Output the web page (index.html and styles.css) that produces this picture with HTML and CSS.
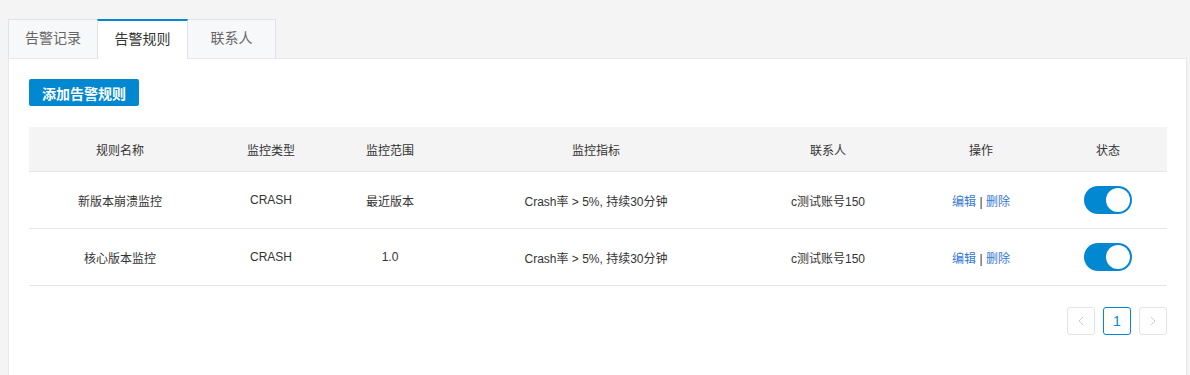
FILE: index.html
```html
<!DOCTYPE html>
<html>

<head>
  <meta charset="UTF-8">
  <title>告警规则</title>
  <link rel="stylesheet" href="styles.css">
</head>

<body>
  <ul class="tabs">
    <li><a href="#">告警记录</a></li>
    <li class="active"><a href="#">告警规则</a></li>
    <li><a href="#">联系人</a></li>
  </ul>

  <div class="panel">
    <button class="add-button">添加告警规则</button>

    <table class="rules">
      <thead>
        <tr>
          <th class="col-name">规则名称</th>
          <th class="col-type">监控类型</th>
          <th class="col-range">监控范围</th>
          <th class="col-metric">监控指标</th>
          <th class="col-contact">联系人</th>
          <th class="col-action">操作</th>
          <th class="col-status">状态</th>
        </tr>
      </thead>
      <tbody>
        <tr>
          <td>新版本崩溃监控</td>
          <td>CRASH</td>
          <td>最近版本</td>
          <td>Crash率 &gt; 5%, 持续30分钟</td>
          <td>c测试账号150</td>
          <td><a href="#">编辑</a> | <a href="#">删除</a></td>
          <td><span class="switch on"><span class="knob"></span></span></td>
        </tr>
        <tr>
          <td>核心版本监控</td>
          <td>CRASH</td>
          <td>1.0</td>
          <td>Crash率 &gt; 5%, 持续30分钟</td>
          <td>c测试账号150</td>
          <td><a href="#">编辑</a> | <a href="#">删除</a></td>
          <td><span class="switch on"><span class="knob"></span></span></td>
        </tr>
      </tbody>
    </table>

    <div class="pager">
      <span class="page disabled">
        <svg width="6" height="10" viewBox="0 0 6 10"><path d="M5 1 L1 5 L5 9" fill="none" stroke="#ccc" stroke-width="1"/></svg>
      </span>
      <span class="page current">1</span>
      <span class="page disabled">
        <svg width="6" height="10" viewBox="0 0 6 10"><path d="M1 1 L5 5 L1 9" fill="none" stroke="#ccc" stroke-width="1"/></svg>
      </span>
    </div>
  </div>
</body>

</html>
```

FILE: styles.css
```css
body {
  margin: 19px 3px 0 8px;
  background-color: #f4f4f4;
  font-family: "Liberation Sans", "Noto Sans CJK SC", sans-serif;
  color: #333;
}

/* tab bar above the panel */
.tabs {
  list-style: none;
  display: flex;
  margin: 0;
  padding: 0;
}

.tabs li {
  width: 89px;
  height: 39px;
  background-color: #f7f8fa;
  border: 1px solid #e1e2e6;
  border-bottom: none;
  margin-right: -1px;
  box-sizing: border-box;
}

.tabs li:first-child {
  width: 90px;
}

.tabs li.active {
  width: 91px;
  height: 40px;
  background-color: #fff;
  border-top: 2px solid #0288d1;
  position: relative;
  z-index: 1;
  margin-bottom: -1px;
}

.tabs a {
  display: block;
  text-align: center;
  line-height: 37px;
  font-size: 14px;
  color: #666;
  text-decoration: none;
}

.tabs li.active a {
  line-height: 36px;
  color: #333;
}

.panel {
  background-color: #fff;
  border: 1px solid #e8e8e8;
  padding: 20px 19px 0 20px;
  height: 300px;
}

.add-button {
  display: block;
  width: 110px;
  height: 27px;
  padding: 0;
  border: none;
  border-radius: 2px;
  background-color: #0288d1;
  color: #fff;
  font-family: inherit;
  font-size: 14px;
  font-weight: bold;
  cursor: pointer;
}

.rules {
  width: 100%;
  margin-top: 21px;
  border-collapse: collapse;
  font-size: 12px;
}

.rules th {
  height: 44px;
  padding: 0;
  background-color: #f4f4f4;
  font-weight: normal;
  color: #333;
  border-bottom: 1px solid #e6e6e6;
}

.rules td {
  height: 56px;
  padding: 0;
  text-align: center;
  border-bottom: 1px solid #e6e6e6;
  color: #333;
}

.col-name { width: 182px; }
.col-type { width: 120px; }
.col-range { width: 118px; }
.col-metric { width: 294px; }
.col-contact { width: 170px; }
.col-action { width: 136px; }
.col-status { width: 118px; }

.rules a {
  color: #3579d2;
  text-decoration: none;
}

/* on/off switch */
.switch {
  display: inline-block;
  vertical-align: middle;
  width: 48px;
  height: 28px;
  border-radius: 14px;
  background-color: #ccc;
  position: relative;
}

.switch.on {
  background-color: #0288d1;
}

.knob {
  position: absolute;
  top: 2px;
  left: 2px;
  width: 24px;
  height: 24px;
  border-radius: 50%;
  background-color: #fff;
}

.switch.on .knob {
  left: 22px;
}

.pager {
  display: flex;
  justify-content: flex-end;
  gap: 8px;
  margin-top: 21px;
}

.page {
  display: flex;
  align-items: center;
  justify-content: center;
  width: 28px;
  height: 28px;
  box-sizing: border-box;
  border: 1px solid #e3e3e3;
  border-radius: 3px;
  font-size: 14px;
  color: #333;
}

.page.current {
  border-color: #0288d1;
  color: #0288d1;
}
```
